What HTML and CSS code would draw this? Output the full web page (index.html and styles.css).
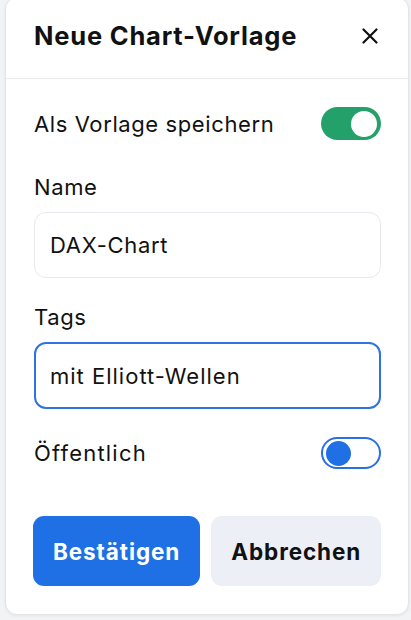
FILE: index.html
```html
<!DOCTYPE html>
<html lang="de">
<head>
<meta charset="utf-8">
<title>Neue Chart-Vorlage</title>
<link rel="stylesheet" href="styles.css">
</head>
<body>
<div class="card">
  <div class="header">
    <h1 class="title">Neue Chart-Vorlage</h1>
    <button class="close" aria-label="Schließen">
      <svg width="16" height="16" viewBox="0 0 16 16"><path d="M1.5 1.5 L14.5 14.5 M14.5 1.5 L1.5 14.5" stroke="#111" stroke-width="2.2" stroke-linecap="round" fill="none"/></svg>
    </button>
  </div>
  <div class="body">
    <div class="row row-first">
      <span class="label">Als Vorlage speichern</span>
      <span class="toggle on"><span class="knob"></span></span>
    </div>
    <div class="field-label">Name</div>
    <div class="input">DAX-Chart</div>
    <div class="field-label field-label-2">Tags</div>
    <div class="input focus">mit Elliott-Wellen</div>
    <div class="row row-public">
      <span class="label label-wide">Öffentlich</span>
      <span class="toggle off"><span class="knob"></span></span>
    </div>
    <div class="actions">
      <button class="btn primary">Bestätigen</button>
      <button class="btn secondary">Abbrechen</button>
    </div>
  </div>
</div>
</body>
</html>
```
FILE: styles.css
```css
html, body {
  margin: 0;
  padding: 0;
}
body {
  background: #f2f3f4;
  font-family: Inter, "Noto Sans", sans-serif;
  color: #111;
  width: 411px;
  height: 620px;
  overflow: hidden;
}
.card {
  box-sizing: border-box;
  width: 404px;
  height: 618px;
  margin: -3px 0 0 5px;
  background: #fff;
  border: 1px solid #e4e4e4;
  border-radius: 12px;
  box-shadow: 0 1px 3px rgba(0,0,0,0.06);
}
.header {
  height: 81px;
  box-sizing: border-box;
  border-bottom: 1px solid #ececec;
  display: flex;
  align-items: center;
  justify-content: space-between;
  padding: 0 30px 4px 28px;
}
.title {
  margin: 0;
  font-size: 25.5px;
  font-weight: 700;
  letter-spacing: 0.8px;
  line-height: 30px;
}
.close {
  border: 0;
  background: none;
  padding: 0;
  width: 16px;
  height: 16px;
  display: flex;
}
.body {
  padding: 0 27px 27px 28px;
}
.row {
  display: flex;
  align-items: center;
  justify-content: space-between;
}
.row-first {
  margin-top: 28px;
}
.row-public {
  margin-top: 28px;
}
.label, .field-label {
  font-size: 22px;
  line-height: 28px;
  letter-spacing: 0.6px;
}
.label-wide {
  letter-spacing: 1.2px;
}
.field-label {
  margin-top: 33px;
}
.field-label-2 {
  margin-top: 25px;
}
.input {
  box-sizing: border-box;
  margin-top: 11px;
  height: 66px;
  border: 1px solid #e6e9f1;
  border-radius: 12px;
  padding: 0 15px;
  display: flex;
  align-items: center;
  font-size: 22px;
  letter-spacing: 0.7px;
}
.input.focus {
  height: 67px;
  border: 2px solid #2e72e4;
  padding: 0 14px;
  letter-spacing: 1px;
}
.toggle {
  box-sizing: border-box;
  width: 60px;
  height: 33px;
  border-radius: 17px;
  display: flex;
  align-items: center;
}
.toggle.on {
  background: #24a06b;
  justify-content: flex-end;
  padding-right: 4px;
}
.toggle.on .knob {
  width: 26px;
  height: 26px;
  border-radius: 50%;
  background: #fff;
}
.toggle.off {
  height: 32px;
  border: 2px solid #2a6fe3;
  background: #fff;
  padding-left: 3px;
}
.toggle.off .knob {
  width: 25px;
  height: 25px;
  border-radius: 50%;
  background: #1f6fe5;
}
.actions {
  margin-top: 47px;
  display: flex;
  gap: 11px;
  margin-left: -1px;
}
.btn {
  height: 70px;
  border: 0;
  border-radius: 11px;
  padding: 0 20px;
  font-family: Inter, "Noto Sans", sans-serif;
  font-size: 22.5px;
  font-weight: 700;
  letter-spacing: 0.9px;
}
.btn.primary {
  background: #1f6fe5;
  color: #fff;
}
.btn.secondary {
  background: #eceff6;
  color: #111;
  flex: 1;
}
```
